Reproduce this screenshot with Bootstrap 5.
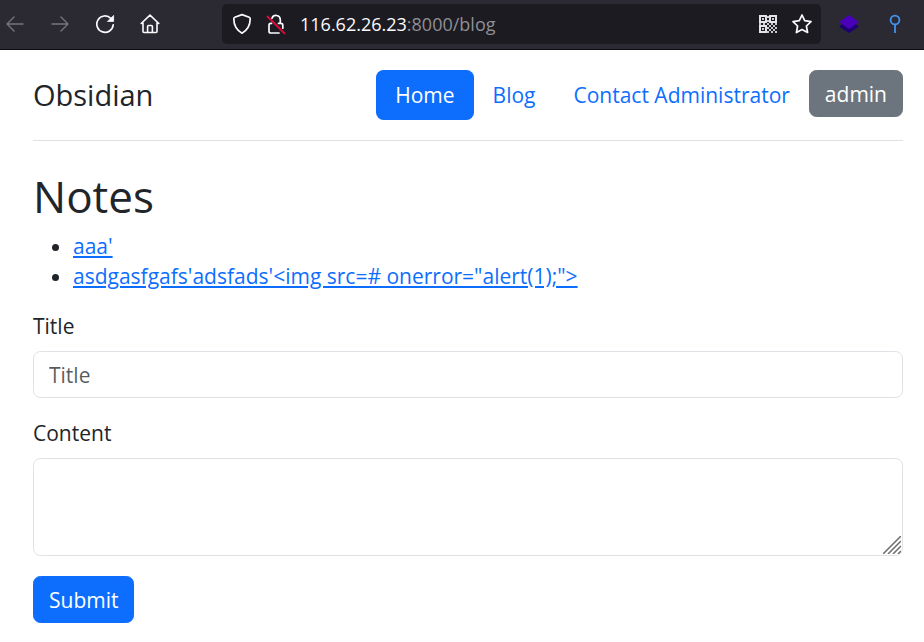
<!DOCTYPE html>
<html lang="en">
<head>
<meta charset="utf-8">
<meta name="viewport" content="width=device-width, initial-scale=1">
<title>Obsidian - Notes</title>
<link href="https://cdn.jsdelivr.net/npm/bootstrap@5.3.0/dist/css/bootstrap.min.css" rel="stylesheet">
<style>
html { font-size: 20px; }
body { font-family: "Open Sans", "Noto Sans", sans-serif; font-size: 21px; line-height: 30px; --bs-border-radius: 8px; }
.toolbar { background: #2b2a33; border-bottom: 1px solid #0c0c0d; height: 50px; padding: 4px 23px 5px 5px; color: #fbfbfe; }
.toolbar svg, .grip { display: block; }
.tool-btn { background: none; border: 0; padding: 0; color: inherit; }
.tool-btn:disabled { color: #76757b; }
.nav-tools { gap: 25px; width: 217px; }
.address { background: #1c1b22; border-radius: 5px; height: 40px; padding: 0 8px 0 10px; gap: 14px; }
.address-text { font-size: 18px; color: #8f8f94; }
.address-text b { font-weight: 400; color: #fbfbfe; }
.ext-tools { gap: 30px; padding-left: 18px; }
.page { padding: 0 21px 20px 33px; }
.brand { font-size: 29px; line-height: 36px; }
.site-head { margin-bottom: 28px; }
.site-head .nav-link { padding: 10px 19px; }
.page h1 { font-size: 44px; line-height: 54px; margin-bottom: 8px; font-weight: 400; }
.note-list { padding-left: 40px; }
.form-label { display: block; margin-bottom: 10px; }
.form-control { padding: 7px 15px; font-size: 21px; line-height: 30px; min-height: 47px; }
textarea.form-control { min-height: 98px; }
textarea::-webkit-resizer { background: transparent; }
.grip { right: 2px; bottom: 2px; pointer-events: none; }
.btn { padding: 8px 15px 7px; font-size: 21px; line-height: 30px; }
</style>
</head>
<body>
<div class="toolbar d-flex align-items-center">
  <div class="nav-tools d-flex align-items-center flex-shrink-0">
    <button class="tool-btn" disabled aria-label="Back"><svg width="20" height="20" fill="none" stroke="currentColor" stroke-width="1.4" stroke-linecap="round" stroke-linejoin="round"><path d="M18 10H2M9 3l-7 7 7 7"/></svg></button>
    <button class="tool-btn" disabled aria-label="Forward"><svg width="20" height="20" fill="none" stroke="currentColor" stroke-width="1.4" stroke-linecap="round" stroke-linejoin="round"><path d="M2 10h16M11 3l7 7-7 7"/></svg></button>
    <button class="tool-btn" aria-label="Reload"><svg width="20" height="20" fill="none" stroke="currentColor" stroke-width="1.7" stroke-linecap="round"><path d="M15.8 4.3A8.2 8.2 0 1 0 18.2 10.8"/><path d="M18.6 1.8v5.6h-5.8z" fill="currentColor" stroke-width=".8" stroke-linejoin="round"/></svg></button>
    <button class="tool-btn" aria-label="Home"><svg width="20" height="20" fill="none" stroke="currentColor" stroke-width="1.6" stroke-linecap="round" stroke-linejoin="round"><path d="M1.2 9.5 10 1.2l8.800 8.300M3 8.500v9q0 1 1 1h12q1 0 1-1v-9M7.600 18.200v-5.700q0-1 1-1h2.800q1 0 1 1v5.700"/></svg></button>
  </div>
  <div class="address d-flex align-items-center flex-grow-1">
    <button class="tool-btn" aria-label="Tracking protection"><svg width="20" height="22" fill="none" stroke="currentColor" stroke-width="1.7" stroke-linejoin="round"><path d="M10 1.600 17.200 4.300q1 .4 1 1.500c0 6.500-2.600 11.200-8.200 14.400C4.400 17 1.800 12.300 1.800 5.800q0-1.100 1-1.500z"/></svg></button>
    <button class="tool-btn" aria-label="Connection not secure"><svg width="20" height="22" fill="none" stroke="currentColor" stroke-width="1.700" stroke-linecap="round"><path d="M6 5.200a4.300 4.300 0 0 1 8.300 1.300V10M12.500 10.400H15q1.800 0 1.800 1.800v3M5.500 10.400H4.800Q3 10.400 3 12.200v6q0 1.800 1.800 1.800H13"/><path d="M1.500 3.500 18.500 20.300" stroke="#e6093c" stroke-width="1.800"/></svg></button>
    <div class="address-text flex-grow-1" role="textbox" aria-label="Address"><b>116.62.26.23</b>:8000/blog</div>
    <button class="tool-btn" aria-label="QR code"><svg width="18" height="18" fill="none" stroke="#e4e4e8" stroke-width="2"><path d="M1 1h6v6H1zM11 1h6v6h-6zM1 11h6v6H1z"/><g fill="#c8c8cc" stroke="none"><path d="M3 3h2v2H3zM13 3h2v2h-2zM3 13h2v2H3zM8 1h2v2H8zM8 5h2v2H8zM0 8h2v2H0zM4 8h2v2H4zM8 8h2v2H8zM12 8h2v2h-2zM16 8h2v2h-2zM10 10h2v2h-2zM14 10h2v2h-2zM8 12h2v2H8zM12 12h2v2h-2zM16 12h2v2h-2zM10 14h2v2h-2zM14 14h2v2h-2zM8 16h2v2H8zM12 16h2v2h-2zM16 16h2v2h-2z"/></g></svg></button>
    <button class="tool-btn" aria-label="Bookmark"><svg width="22" height="22" fill="none" stroke="currentColor" stroke-width="1.700" stroke-linejoin="round"><path d="m11 2 2.700 5.700 6.300.9-4.600 4.400 1.200 6.500-5.600-3-5.600 3L6.600 13 2 8.600l6.300-.9z"/></svg></button>
  </div>
  <div class="ext-tools d-flex align-items-center">
    <button class="tool-btn" aria-label="Layers extension"><svg width="20" height="20"><path d="M0 12.500 3.500 10h13l3.500 2.500L10 19z" fill="#1d0070"/><path d="M10 1 20 8 10 15 0 8z" fill="#4a00b8"/></svg></button>
    <button class="tool-btn" aria-label="Pin extension"><svg width="12" height="20" fill="none" stroke="#4094ee" stroke-width="1.800"><circle cx="6" cy="6" r="4.400"/><path d="M6 10.400V19"/></svg></button>
  </div>
</div>

<div class="page">
  <header class="site-head d-flex align-items-start border-bottom py-3">
    <a href="#" class="brand align-self-center me-auto text-body text-decoration-none">Obsidian</a>
    <ul class="nav nav-pills flex-nowrap">
      <li class="nav-item"><a href="#" class="nav-link active" aria-current="page">Home</a></li>
      <li class="nav-item"><a href="#" class="nav-link">Blog</a></li>
      <li class="nav-item"><a href="#" class="nav-link">Contact Administrator</a></li>
    </ul>
    <button type="button" class="btn btn-secondary">admin</button>
  </header>
  <main>
    <h1>Notes</h1>
    <ul class="note-list mb-3">
      <li><a href="#">aaa'</a></li>
      <li><a href="#">asdgasfgafs'adsfads'&lt;img src=# onerror="alert(1);"&gt;</a></li>
    </ul>
    <form>
      <div class="mb-3">
        <label for="title" class="form-label">Title</label>
        <input type="text" class="form-control" id="title" placeholder="Title">
      </div>
      <div class="mb-3">
        <label for="content" class="form-label">Content</label>
        <div class="position-relative">
          <textarea class="form-control" id="content"></textarea>
          <svg class="grip position-absolute" width="18" height="18" stroke="#6c6c6c" stroke-width="1.500"><path d="M0 18 18 0M5 18 18 5M10 18 18 10M15 18 18 15"/></svg>
        </div>
      </div>
      <button type="submit" class="btn btn-primary">Submit</button>
    </form>
  </main>
</div>
<script src="https://cdn.jsdelivr.net/npm/bootstrap@5.3.0/dist/js/bootstrap.bundle.min.js"></script>
</body>
</html>
